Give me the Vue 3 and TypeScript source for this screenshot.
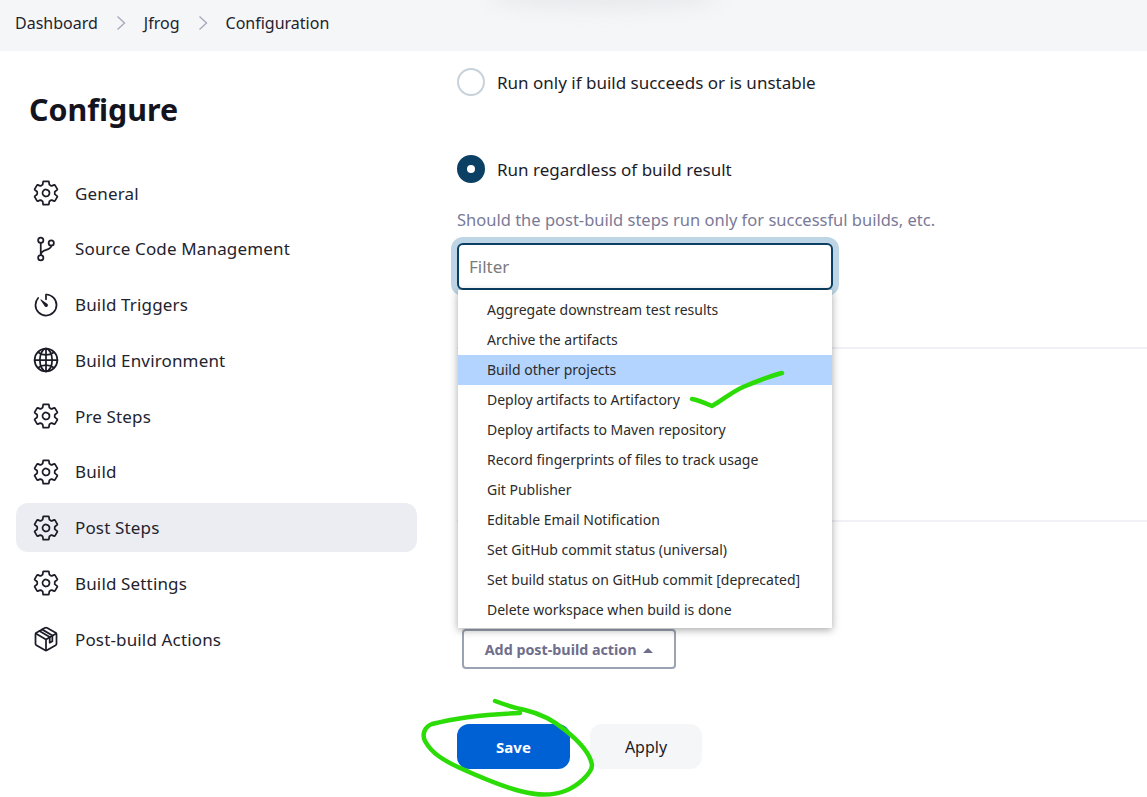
<script setup lang="ts">
interface NavItem {
  label: string;
  icon: 'gear' | 'branch' | 'timer' | 'globe' | 'box';
  active?: boolean;
}

const navItems: NavItem[] = [
  { label: 'General', icon: 'gear' },
  { label: 'Source Code Management', icon: 'branch' },
  { label: 'Build Triggers', icon: 'timer' },
  { label: 'Build Environment', icon: 'globe' },
  { label: 'Pre Steps', icon: 'gear' },
  { label: 'Build', icon: 'gear' },
  { label: 'Post Steps', icon: 'gear', active: true },
  { label: 'Build Settings', icon: 'gear' },
  { label: 'Post-build Actions', icon: 'box' },
];

const menuItems = [
  'Aggregate downstream test results',
  'Archive the artifacts',
  'Build other projects',
  'Deploy artifacts to Artifactory',
  'Deploy artifacts to Maven repository',
  'Record fingerprints of files to track usage',
  'Git Publisher',
  'Editable Email Notification',
  'Set GitHub commit status (universal)',
  'Set build status on GitHub commit [deprecated]',
  'Delete workspace when build is done',
];
</script>

<template>
  <div class="page">
    <header class="crumbs">
      <span>Dashboard</span>
      <svg class="chev" viewBox="0 0 10 16"><path d="M1.5 1.5 8.5 8l-7 6.5" /></svg>
      <span>Jfrog</span>
      <svg class="chev" viewBox="0 0 10 16"><path d="M1.5 1.5 8.5 8l-7 6.5" /></svg>
      <span>Configuration</span>
      <div class="smudge"></div>
    </header>

    <div class="body">
      <aside class="side">
        <h1>Configure</h1>
        <nav class="nav">
          <a v-for="item in navItems" :key="item.label" class="nav-item" :class="{ active: item.active }">
            <svg class="ico" viewBox="0 0 512 512">
              <template v-if="item.icon === 'gear'">
                <path d="M262.29 192.31a64 64 0 1057.4 57.4 64.13 64.13 0 00-57.4-57.4zM416.39 256a154.34 154.34 0 01-1.53 20.79l45.21 35.46a10.81 10.81 0 012.45 13.75l-42.77 74a10.81 10.81 0 01-13.14 4.59l-44.9-18.08a16.11 16.11 0 00-15.17 1.75A164.48 164.48 0 01325 400.8a15.94 15.94 0 00-8.82 12.14l-6.73 47.89a11.08 11.08 0 01-10.68 9.17h-85.54a11.11 11.11 0 01-10.69-8.87l-6.72-47.82a16.07 16.07 0 00-9-12.22 155.3 155.3 0 01-21.46-12.57 16 16 0 00-15.11-1.71l-44.89 18.07a10.81 10.81 0 01-13.14-4.58l-42.77-74a10.8 10.8 0 012.45-13.75l38.21-30a16.05 16.05 0 006-14.08c-.36-4.17-.58-8.33-.58-12.5s.21-8.27.58-12.35a16 16 0 00-6.07-13.94l-38.19-30A10.81 10.81 0 0149.48 186l42.77-74a10.81 10.81 0 0113.14-4.59l44.9 18.08a16.11 16.11 0 0015.17-1.75A164.48 164.48 0 01187 111.2a15.94 15.94 0 008.82-12.14l6.73-47.89A11.08 11.08 0 01213.23 42h85.54a11.11 11.11 0 0110.69 8.87l6.72 47.82a16.07 16.07 0 009 12.22 155.3 155.3 0 0121.46 12.57 16 16 0 0015.11 1.71l44.89-18.07a10.81 10.81 0 0113.14 4.58l42.77 74a10.8 10.8 0 01-2.45 13.75l-38.21 30a16.05 16.05 0 00-6.05 14.08c.33 4.14.55 8.3.55 12.47z" />
              </template>
              <template v-else-if="item.icon === 'branch'">
                <circle cx="160" cy="96" r="48" />
                <circle cx="160" cy="416" r="48" />
                <circle cx="352" cy="144" r="48" />
                <path d="M160 144v224M352 192c0 112-192 48-192 176" />
              </template>
              <template v-else-if="item.icon === 'timer'">
                <path d="M112.91 128A191.85 191.85 0 0064 254c-1.18 106.35 85.65 193.8 192 194 106.2.2 192-85.83 192-192 0-104.54-83.55-189.61-187.5-192a4.36 4.36 0 00-4.5 4.37V152" />
                <path class="solid" d="M233.38 278.63l-79-113a8.13 8.13 0 0111.32-11.32l113 79a32.5 32.5 0 01-37 53.32 33.21 33.21 0 01-8.32-8z" />
              </template>
              <template v-else-if="item.icon === 'globe'">
                <path d="M256 48C141.13 48 48 141.13 48 256s93.13 208 208 208 208-93.13 208-208S370.87 48 256 48z" />
                <path d="M256 48c-58.07 0-112.67 93.13-112.67 208S197.93 464 256 464s112.67-93.13 112.67-208S314.07 48 256 48z" />
                <path d="M117.33 117.33c38.24 27.15 86.38 43.34 138.67 43.34s100.43-16.19 138.67-43.34M394.67 394.67c-38.24-27.15-86.38-43.34-138.67-43.34s-100.43 16.19-138.67 43.34" />
                <path d="M256 48v416M464 256H48" />
              </template>
              <template v-else>
                <path d="M448 341.37V170.61A32 32 0 00432.11 143l-152-88.46a47.94 47.94 0 00-48.24 0L79.89 143A32 32 0 0064 170.61v170.76A32 32 0 0079.89 369l152 88.46a48 48 0 0048.24 0l152-88.46A32 32 0 00448 341.37z" />
                <path d="M69 153.99l187 110 187-110M256 463.99v-200" />
                <path d="M136 108l188 112v104l48-28V192L184 80" />
              </template>
            </svg>
            <span>{{ item.label }}</span>
          </a>
        </nav>
      </aside>

      <main class="main">
        <label class="radio first">
          <span class="dot"></span>
          <span>Run only if build succeeds or is unstable</span>
        </label>
        <label class="radio second">
          <span class="dot on"></span>
          <span>Run regardless of build result</span>
        </label>
        <p class="hint">Should the post-build steps run only for successful builds, etc.</p>

        <div class="filter-area">
          <div class="rule rule-a"></div>
          <div class="rule rule-b"></div>
          <input class="filter" placeholder="Filter" />
          <ul class="menu">
            <li v-for="(m, i) in menuItems" :key="m" :class="{ hl: i === 2 }">{{ m }}</li>
          </ul>
          <button class="add">Add post-build action <i class="caret"></i></button>
        </div>

        <div class="actions">
          <button class="save">Save</button>
          <button class="apply">Apply</button>
        </div>
      </main>
    </div>

    <svg class="ink" width="1147" height="797" viewBox="0 0 1147 797">
      <path d="M692 399C698 400 705 403 712 406C720 402 730 393 743 387C755 382 770 376 782 373" />
      <path d="M520 713C490 714 455 718 432 724C424 727 422 735 425 741C432 754 445 761 460 768C480 777 500 786 520 791C535 795 552 796 565 791C578 786 592 773 592 765C590 752 575 738 565 730C553 720 542 714 525 710C515 708 503 704 495 701" />
    </svg>
  </div>
</template>

<style>
html, body {
  margin: 0;
  background: #fff;
}
</style>

<style scoped>
.page {
  position: relative;
  width: 1147px;
  height: 797px;
  overflow: hidden;
  font-family: "Noto Sans", "Open Sans", sans-serif;
  color: #14141f;
}
.crumbs {
  position: relative;
  display: flex;
  align-items: center;
  height: 51px;
  padding: 0 0 5px 15px;
  box-sizing: border-box;
  background: #f5f6f8;
  font-size: 16px;
  color: #23232e;
  gap: 18px;
}
.chev {
  width: 10px;
  height: 16px;
  fill: none;
  stroke: #a9a9bd;
  stroke-width: 1.4;
}
.smudge {
  position: absolute;
  left: 490px;
  top: -14px;
  width: 230px;
  height: 24px;
  border-radius: 50%;
  background: #e9eaed;
  filter: blur(8px);
}
.body {
  display: flex;
}
.side {
  width: 401px;
  margin-left: 16px;
  flex: none;
}
.side h1 {
  margin: 39px 0 0 13px;
  font-size: 30.4px;
  line-height: 40px;
  font-weight: 700;
  color: #14141f;
}
.nav {
  display: flex;
  flex-direction: column;
  gap: 6.75px;
  margin-top: 38.5px;
}
.nav-item {
  display: flex;
  align-items: center;
  gap: 15px;
  height: 49px;
  padding-left: 16px;
  border-radius: 12px;
  font-size: 17px;
  letter-spacing: 0.15px;
  color: #23232e;
}
.nav-item.active {
  background: #ecedf2;
}
.ico {
  width: 28px;
  height: 28px;
  flex: none;
  fill: none;
  stroke: #1c1c28;
  stroke-width: 32;
  stroke-linejoin: round;
  stroke-linecap: round;
}
.ico .solid {
  fill: #1c1c28;
  stroke: none;
}
.main {
  margin-left: 40px;
  flex: 1;
  min-width: 0;
}
.radio {
  display: flex;
  align-items: center;
  gap: 12px;
  font-size: 17px;
  color: #1c1c28;
}
.radio.first {
  margin-top: 17px;
}
.radio.second {
  margin-top: 59px;
}
.dot {
  box-sizing: border-box;
  width: 28px;
  height: 28px;
  border: 2px solid #c7d2da;
  border-radius: 50%;
  background: #fff;
}
.dot.on {
  border: 10px solid #0b4064;
  background: #fff;
}
.hint {
  margin: 25px 0 0;
  font-size: 16.5px;
  line-height: 24px;
  color: #7a7a97;
}
.filter-area {
  position: relative;
  margin-top: 11px;
}
.rule {
  position: absolute;
  left: 0;
  right: 0;
  height: 2px;
  background: #f1f1f5;
}
.rule-a {
  top: 104px;
}
.rule-b {
  top: 277px;
}
.filter {
  position: relative;
  display: block;
  box-sizing: border-box;
  width: 376px;
  height: 47px;
  padding: 0 10px;
  border: 2px solid #0b4064;
  border-radius: 6px;
  outline: none;
  box-shadow: 0 0 0 6px #bdd5e5;
  font: 17px "Noto Sans", "Open Sans", sans-serif;
  color: #14141f;
}
.filter::placeholder {
  color: #7b7b7b;
  opacity: 1;
}
.menu {
  position: relative;
  z-index: 2;
  margin: 0 0 0 1px;
  padding: 5px 0 3px;
  width: 374px;
  list-style: none;
  background: #fff;
  box-shadow: 0 2px 8px rgba(0, 0, 0, 0.35);
  font-size: 14px;
  color: #2b2b2b;
}
.menu li {
  height: 30px;
  line-height: 30px;
  padding-left: 29px;
}
.menu li.hl {
  background: #b3d4ff;
}
.add {
  display: block;
  box-sizing: border-box;
  width: 214px;
  height: 40px;
  margin: 1px 0 0 5px;
  border: 2px solid #9aa3b2;
  border-radius: 4px;
  background: #fff;
  font: 700 14.3px "Noto Sans", "Open Sans", sans-serif;
  color: #6e6e8c;
}
.caret {
  display: inline-block;
  width: 0;
  height: 0;
  margin-left: 3px;
  vertical-align: 2px;
  border-left: 5px solid transparent;
  border-right: 5px solid transparent;
  border-bottom: 5px solid #6e6e8c;
}
.actions {
  display: flex;
  gap: 20px;
  margin-top: 55px;
}
.actions button {
  height: 45px;
  border: 0;
  border-radius: 12px;
  font-family: "Noto Sans", "Open Sans", sans-serif;
  font-size: 15px;
}
.save {
  width: 113px;
  background: #0061d5;
  color: #fff;
  font-weight: 700;
}
.actions .apply {
  width: 112px;
  background: #f5f6f8;
  color: #1c1c28;
  font-size: 16px;
}
.ink {
  position: absolute;
  left: 0;
  top: 0;
  z-index: 5;
  fill: none;
  stroke: #2bdc06;
  stroke-width: 4.5;
  stroke-linecap: round;
  stroke-linejoin: round;
  pointer-events: none;
}
</style>
